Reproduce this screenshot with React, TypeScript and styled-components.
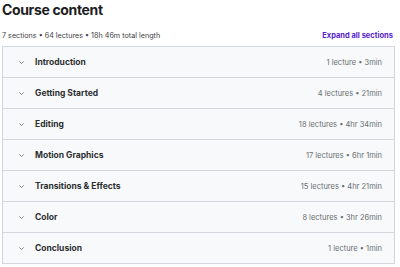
import React, { ReactElement } from 'react'
import styled, { createGlobalStyle } from 'styled-components'

const GlobalStyle = createGlobalStyle`
    body {
        margin: 0;
        background: #ffffff;
        font-family: Inter, "Open Sans", sans-serif;
        color: #1c1d1f;
    }
`

const Wrapper = styled.div`
    width: 393px;
    padding: 1px 0 0 2px;
`
const Title = styled.h2`
    margin: 0;
    font-size: 14px;
    font-weight: 700;
    line-height: 17px;
    letter-spacing: -0.35px;
`
const HeaderRow = styled.div`
    display: flex;
    justify-content: space-between;
    align-items: center;
    margin-top: 11px;
    height: 12px;
    margin-bottom: 5px;
`
const Summary = styled.span`
    font-size: 7.2px;
    color: #3e4143;
`
const ExpandLink = styled.button`
    background: none;
    border: none;
    padding: 0 2px 0 0;
    font-family: inherit;
    font-size: 7.5px;
    font-weight: 700;
    color: #5624d0;
    cursor: pointer;
`
const Panel = styled.div`
    border: 1px solid #d1d7dc;
    border-bottom: none;
`
const SectionRow = styled.div`
    display: flex;
    align-items: center;
    height: 30px;
    padding: 0 12px 0 15px;
    background: #f7f9fa;
    border-bottom: 1px solid #d1d7dc;
`
const Chevron = styled.svg`
    width: 7px;
    height: 7px;
    margin-right: 10px;
    flex-shrink: 0;
`
const SectionTitle = styled.span`
    flex: 1;
    font-size: 8.5px;
    font-weight: 700;
    color: #2d2f31;
`
const SectionMeta = styled.span`
    font-size: 7.5px;
    color: #6a6f73;
`

const sections = [
    { title: 'Introduction', meta: '1 lecture • 3min' },
    { title: 'Getting Started', meta: '4 lectures • 21min' },
    { title: 'Editing', meta: '18 lectures • 4hr 34min' },
    { title: 'Motion Graphics', meta: '17 lectures • 6hr 1min' },
    { title: 'Transitions & Effects', meta: '15 lectures • 4hr 21min' },
    { title: 'Color', meta: '8 lectures • 3hr 26min' },
    { title: 'Conclusion', meta: '1 lecture • 1min' },
]

export default function App(): ReactElement {
    return (
        <Wrapper>
            <GlobalStyle />
            <Title>Course content</Title>
            <HeaderRow>
                <Summary>7 sections • 64 lectures • 18h 46m total length</Summary>
                <ExpandLink>Expand all sections</ExpandLink>
            </HeaderRow>
            <Panel>
                {sections.map(s => (
                    <SectionRow key={s.title}>
                        <Chevron viewBox="0 0 10 10">
                            <path d="M2 3.5 L5 6.5 L8 3.5" fill="none" stroke="#6a6f73" strokeWidth="1.2" />
                        </Chevron>
                        <SectionTitle>{s.title}</SectionTitle>
                        <SectionMeta>{s.meta}</SectionMeta>
                    </SectionRow>
                ))}
            </Panel>
        </Wrapper>
    )
}
